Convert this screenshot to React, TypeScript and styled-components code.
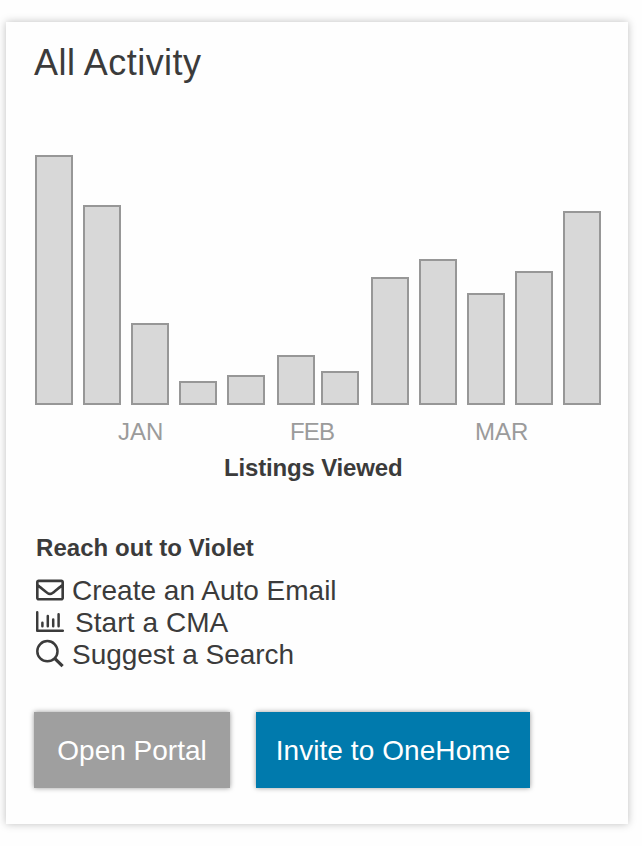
import React from "react";
import styled, { createGlobalStyle } from "styled-components";
import { FaRegEnvelope } from "react-icons/fa";

const GlobalStyle = createGlobalStyle`
  body {
    margin: 0;
    background: #fefefe;
    color: #3b3b3b;
    font-family: "Liberation Sans", Arial, sans-serif;
  }
`;

const Page = styled.main`
  padding: 22px 0 22px 6px;
`;

const Card = styled.section`
  box-sizing: border-box;
  width: 622px;
  height: 802px;
  padding: 19px 28px 0;
  background: #fefefe;
  box-shadow: 0 0 8px rgba(0, 0, 0, 0.25);
`;

const Title = styled.h1`
  margin: 0;
  font-size: 36px;
  font-weight: 400;
  line-height: 44px;
  letter-spacing: 0.45px;
`;

const Chart = styled.div`
  display: flex;
  align-items: flex-end;
  height: 250px;
  margin: 70px 0 0 1px;
`;

const Bar = styled.div<{ $height: number; $gap: number }>`
  box-sizing: border-box;
  width: 38px;
  height: ${(p) => p.$height}px;
  margin-right: ${(p) => p.$gap}px;
  flex: none;
  border: 2px solid #979797;
  background: #d8d8d8;
`;

const Months = styled.div`
  display: flex;
  margin-top: 13px;
  color: #9b9b9b;
  font-size: 24px;
  line-height: 28px;
`;

const Month = styled.span<{ $width: number; $start: number; $spacing: number }>`
  width: ${(p) => p.$width}px;
  margin-left: ${(p) => p.$start}px;
  letter-spacing: ${(p) => p.$spacing}px;
  white-space: nowrap;
`;

const Caption = styled.div`
  margin: 8px 0 0 190px;
  font-size: 24px;
  font-weight: 700;
  line-height: 28px;
  letter-spacing: -0.17px;
`;

const Heading = styled.h2`
  margin: 52px 0 12px 2px;
  font-size: 24px;
  font-weight: 700;
  line-height: 28px;
  letter-spacing: 0.05px;
`;

const ActionList = styled.ul`
  margin: 0;
  padding: 0 0 0 2px;
  list-style: none;
`;

const Action = styled.li<{ $gap: number; $spacing: number }>`
  display: flex;
  align-items: flex-start;
  gap: ${(p) => p.$gap}px;
  height: 32px;
  font-size: 28px;
  letter-spacing: ${(p) => p.$spacing}px;
`;

const IconSlot = styled.span`
  display: flex;
  align-items: center;
  flex: none;
  width: 28px;
  height: 32px;
`;

const Label = styled.span`
  padding-top: 1px;
  line-height: 32px;
`;

const Buttons = styled.div`
  display: flex;
  gap: 26px;
  margin-top: 42px;
`;

const Button = styled.button<{ $width: number; $color: string; $spacing: number }>`
  box-sizing: border-box;
  width: ${(p) => p.$width}px;
  height: 76px;
  padding: 2px 0 0;
  border: 0;
  background: ${(p) => p.$color};
  box-shadow: 0 0 5px rgba(0, 0, 0, 0.4);
  color: #fff;
  font: 28px/74px "Liberation Sans", Arial, sans-serif;
  letter-spacing: ${(p) => p.$spacing}px;
`;

const bars = [
  { height: 250, gap: 10 },
  { height: 200, gap: 10 },
  { height: 82, gap: 10 },
  { height: 24, gap: 10 },
  { height: 30, gap: 12 },
  { height: 50, gap: 6 },
  { height: 34, gap: 12 },
  { height: 128, gap: 10 },
  { height: 146, gap: 10 },
  { height: 112, gap: 10 },
  { height: 134, gap: 10 },
  { height: 194, gap: 0 },
];

const ChartIcon = () => (
  <svg width="28" height="32" viewBox="0 0 28 32" fill="none" stroke="currentColor" strokeLinecap="round">
    <path d="M1.2 6.2V24.8H26.8" strokeWidth="2.5" strokeLinejoin="round" />
    <path d="M6.4 16.8V20.2M11.8 9.9V20.2M17.2 13.5V20.2M22.6 8.2V20.2" strokeWidth="2.5" />
  </svg>
);

const SearchIcon = () => (
  <svg width="28" height="32" viewBox="0 0 28 32" fill="none" stroke="currentColor">
    <circle cx="11.4" cy="13.2" r="10.1" strokeWidth="2.5" />
    <path d="M18.9 20.6L26.6 28.2" strokeWidth="3.2" />
  </svg>
);

export default function App() {
  return (
    <Page>
      <GlobalStyle />
      <Card>
        <Title>All Activity</Title>
        <Chart>
          {bars.map((bar, i) => (
            <Bar key={i} $height={bar.height} $gap={bar.gap} />
          ))}
        </Chart>
        <Months>
          <Month $start={84} $width={172} $spacing={0}>JAN</Month>
          <Month $start={0} $width={185} $spacing={-0.8}>FEB</Month>
          <Month $start={0} $width={60} $spacing={0}>MAR</Month>
        </Months>
        <Caption>Listings Viewed</Caption>
        <Heading>Reach out to Violet</Heading>
        <ActionList>
          <Action $gap={8} $spacing={0}>
            <IconSlot><FaRegEnvelope size={28} /></IconSlot>
            <Label>Create an Auto Email</Label>
          </Action>
          <Action $gap={11} $spacing={0.08}>
            <IconSlot><ChartIcon /></IconSlot>
            <Label>Start a CMA</Label>
          </Action>
          <Action $gap={8} $spacing={-0.03}>
            <IconSlot><SearchIcon /></IconSlot>
            <Label>Suggest a Search</Label>
          </Action>
        </ActionList>
        <Buttons>
          <Button $width={196} $color="#9f9f9f" $spacing={0}>Open Portal</Button>
          <Button $width={274} $color="#007aad" $spacing={0.07}>Invite to OneHome</Button>
        </Buttons>
      </Card>
    </Page>
  );
}
